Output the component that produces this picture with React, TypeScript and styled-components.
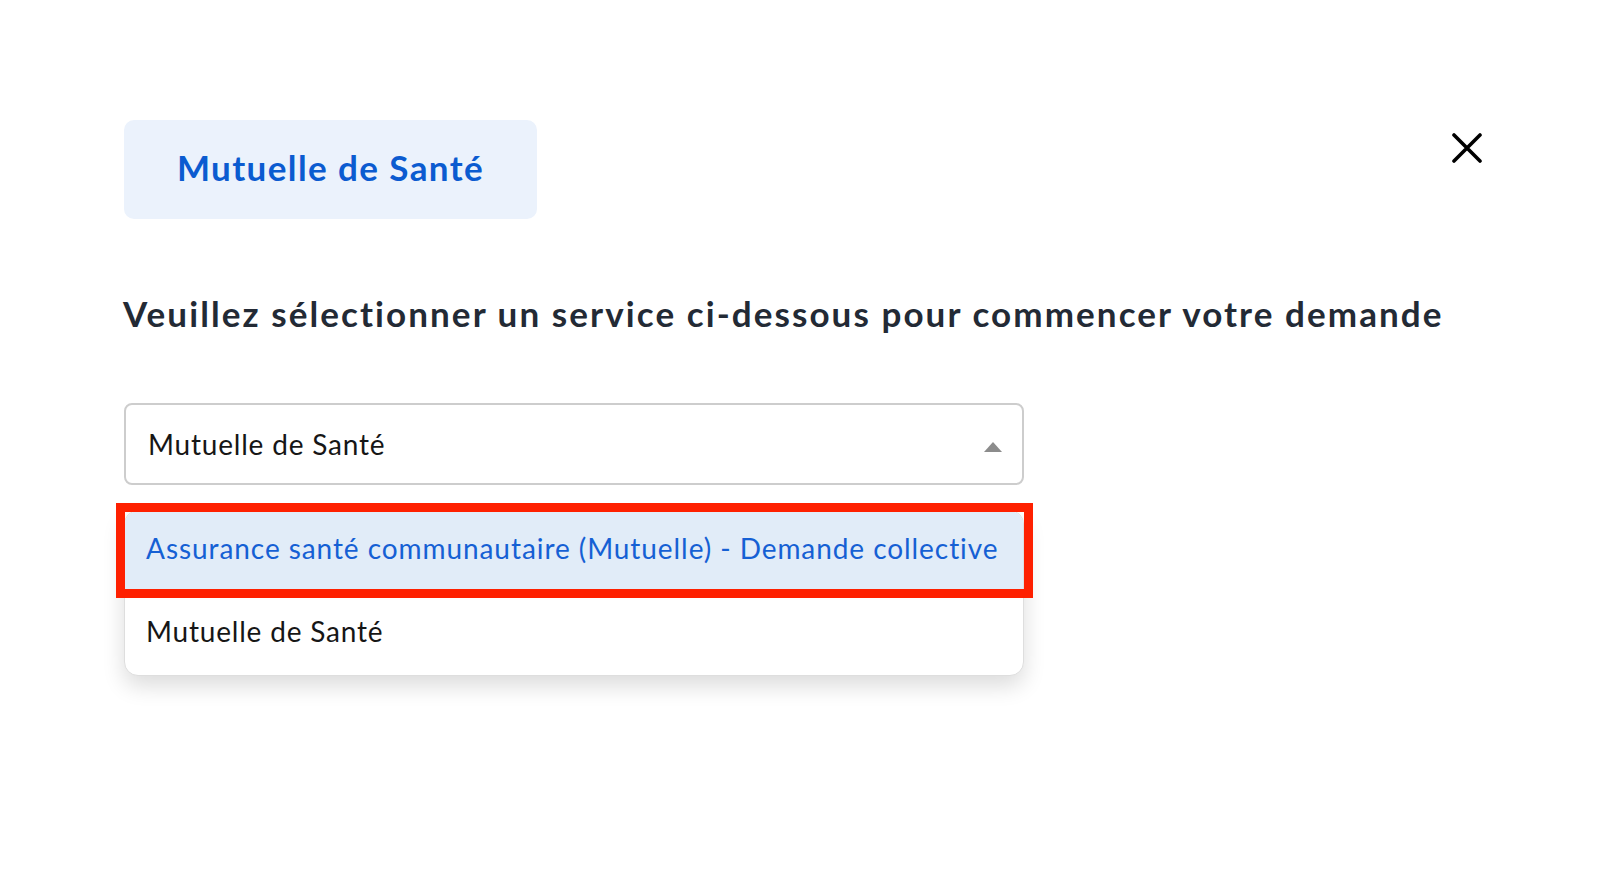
import React from 'react';
import styled, { createGlobalStyle } from 'styled-components';

const GlobalStyle = createGlobalStyle`
  html, body {
    margin: 0;
    padding: 0;
    background: #ffffff;
  }
  body {
    font-family: Lato, "Noto Sans", "Liberation Sans", sans-serif;
  }
`;

const Page = styled.div`
  width: 1600px;
  min-height: 889px;
  box-sizing: border-box;
  padding: 120px 118px 0 124px;
`;

const HeaderRow = styled.div`
  display: flex;
  justify-content: space-between;
  align-items: flex-start;
`;

const Badge = styled.div`
  width: 413px;
  height: 99px;
  box-sizing: border-box;
  padding-bottom: 5px;
  border-radius: 10px;
  background: #ebf2fc;
  color: #0b5bd0;
  font-size: 35px;
  font-weight: 700;
  letter-spacing: 1.4px;
  display: flex;
  align-items: center;
  justify-content: center;
`;

const CloseButton = styled.button`
  margin-top: 13px;
  width: 30px;
  height: 30px;
  padding: 0;
  border: none;
  background: transparent;
  cursor: pointer;
`;

const Heading = styled.h1`
  margin: 72px 0 0 -1px;
  font-size: 35px;
  line-height: 44px;
  font-weight: 700;
  color: #232a35;
  letter-spacing: 2.08px;
  white-space: nowrap;
`;

const Field = styled.div`
  margin-top: 68px;
  width: 900px;
  position: relative;
`;

const SelectBox = styled.div`
  height: 82px;
  box-sizing: border-box;
  border: 2px solid #cdcdcd;
  border-radius: 8px;
  padding: 0 20px 0 22px;
  display: flex;
  align-items: center;
  justify-content: space-between;
  font-size: 28px;
  letter-spacing: 0.8px;
  color: #161616;
`;

const Caret = styled.span`
  width: 0;
  height: 0;
  border-left: 9px solid transparent;
  border-right: 9px solid transparent;
  border-bottom: 10px solid #8c8c8c;
  margin-top: 6px;
`;

const Menu = styled.ul`
  list-style: none;
  margin: 25px 0 0;
  padding: 0 0 4px;
  border: 1px solid #dedede;
  border-radius: 14px;
  background: #ffffff;
  box-shadow: 0 10px 22px rgba(0, 0, 0, 0.14);
`;

const Option = styled.li<{ $active?: boolean }>`
  position: relative;
  height: 80px;
  box-sizing: border-box;
  padding: 0 21px ${(p) => (p.$active ? '6px' : '0')};
  display: flex;
  align-items: center;
  font-size: 28px;
  letter-spacing: ${(p) => (p.$active ? '0.93px' : '0.8px')};
  white-space: nowrap;
  color: ${(p) => (p.$active ? '#1560d4' : '#161616')};
  background: ${(p) => (p.$active ? '#e1ecf8' : 'transparent')};
  border-radius: ${(p) => (p.$active ? '13px 13px 0 0' : '0')};
`;

const Highlight = styled.span`
  position: absolute;
  top: -8px;
  left: -9px;
  right: -10px;
  bottom: -7px;
  border: 9px solid #fe2000;
  pointer-events: none;
`;

const App = () => {
  return (
    <Page>
      <GlobalStyle />
      <HeaderRow>
        <Badge>Mutuelle de Santé</Badge>
        <CloseButton aria-label="Fermer">
          <svg width="30" height="30" viewBox="0 0 30 30">
            <path
              d="M2 2 L28 28 M28 2 L2 28"
              stroke="#000"
              strokeWidth="3.6"
              strokeLinecap="round"
            />
          </svg>
        </CloseButton>
      </HeaderRow>

      <Heading>Veuillez sélectionner un service ci-dessous pour commencer votre demande</Heading>

      <Field>
        <SelectBox>
          <span>Mutuelle de Santé</span>
          <Caret />
        </SelectBox>
        <Menu>
          <Option $active>
            Assurance santé communautaire (Mutuelle) - Demande collective
            <Highlight />
          </Option>
          <Option>Mutuelle de Santé</Option>
        </Menu>
      </Field>
    </Page>
  );
};

export default App;
